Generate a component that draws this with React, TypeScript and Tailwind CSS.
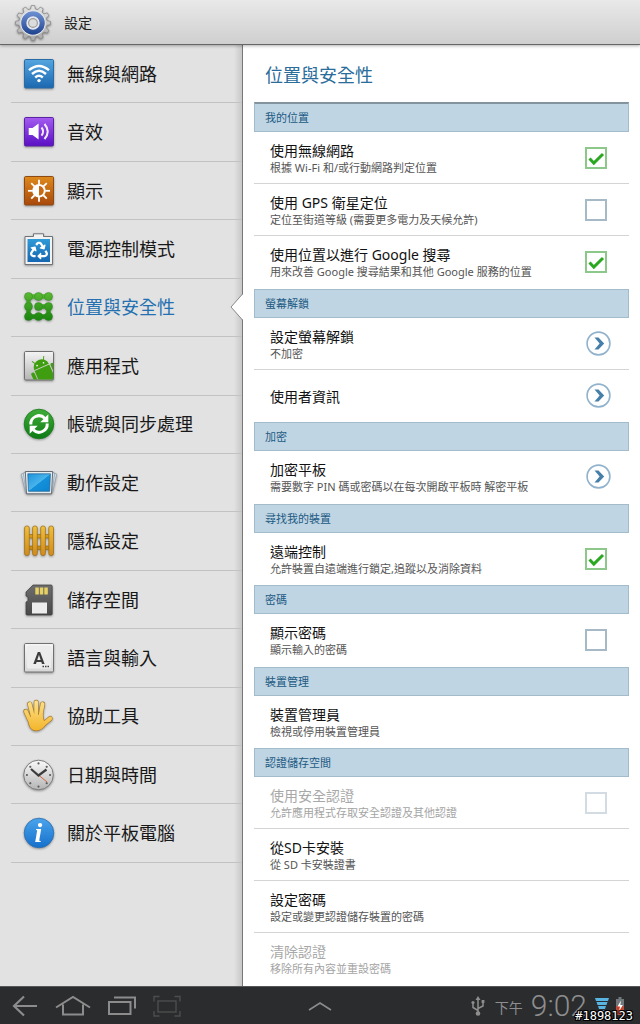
import type { ReactNode } from "react";
import { FaRecycle } from "react-icons/fa";

function Gradient({ id, from, to }: { id: string; from: string; to: string }) {
  return (
    <linearGradient id={id} x1="0" y1="0" x2="0" y2="1">
      <stop offset="0" stopColor={from} />
      <stop offset="1" stopColor={to} />
    </linearGradient>
  );
}

function Icon({ children }: { children: ReactNode }) {
  return (
    <svg viewBox="0 0 36 36" className="size-9 shrink-0 overflow-visible drop-shadow-[0_1px_1px_rgba(0,0,0,0.35)]" aria-hidden="true">
      {children}
    </svg>
  );
}

function Tile({ id, from, to, stroke }: { id: string; from: string; to: string; stroke: string }) {
  return (
    <>
      <defs>
        <Gradient id={id} from={from} to={to} />
      </defs>
      <rect x="3.5" y="3.5" width="29" height="28.5" rx="1.2" fill={`url(#${id})`} stroke={stroke} strokeWidth="1" />
    </>
  );
}

function WifiIcon() {
  return (
    <Icon>
      <Tile id="wifi" from="#55a5e0" to="#1b68b0" stroke="#2a6ca6" />
      <g fill="none" stroke="#fff" strokeWidth="2.4">
        <path d="M8 14.2Q18 5.600 28 14.200" />
        <path d="M11 18Q18 11.600 25 18" />
        <path d="M14.200 21.500Q18 18 21.800 21.500" />
      </g>
      <circle cx="18" cy="24.600" r="1.700" fill="#fff" />
    </Icon>
  );
}

function SoundIcon() {
  return (
    <Icon>
      <Tile id="sound" from="#a45cf0" to="#5a0fc4" stroke="#5a22a4" />
      <path d="M7.700 14H11.500L17.600 9.500V25.500L11.500 21H7.700Z" fill="#fff" />
      <g fill="none" stroke="#fff" strokeWidth="2" opacity="0.9">
        <path d="M20.500 13.500Q23.800 17.500 20.500 21.600" />
        <path d="M23.500 10Q30 17.500 23.500 25" />
      </g>
    </Icon>
  );
}

function DisplayIcon() {
  const rays = [0, 45, 90, 135, 180, 225, 270, 315];
  return (
    <Icon>
      <Tile id="display" from="#de8a1c" to="#a8480c" stroke="#8e4a12" />
      <g stroke="#fff" strokeWidth="1.800">
        {rays.map((a) => (
          <path key={a} d="M18 6.800V11.500" transform={`rotate(${a} 18 17.800)`} />
        ))}
      </g>
      <circle cx="18" cy="17.800" r="5.800" fill="#c86a14" stroke="#fff" strokeWidth="2" />
      <path d="M18 12V23.600A5.800 5.800 0 0 1 18 12Z" fill="#fff" />
    </Icon>
  );
}

function PowerIcon() {
  return (
    <Icon>
      <defs>
        <Gradient id="power" from="#2f9ad8" to="#1566b0" />
      </defs>
      <path d="M4 5.500H12.500V2.800H22.500V5.500H31.500V33.500H4Z" fill="#f2f2f2" stroke="#6f7377" strokeWidth="1" strokeLinejoin="round" />
      <rect x="6.500" y="8" width="22.500" height="23" fill="url(#power)" />
      <FaRecycle x="9" y="10.500" width="17.500" height="17.500" color="#fff" />
    </Icon>
  );
}

function PatternIcon() {
  const stops = [7.500, 17.500, 27.500];
  return (
    <Icon>
      <defs>
        <linearGradient id="pattern" gradientUnits="userSpaceOnUse" x1="0" y1="3" x2="0" y2="32">
          <stop offset="0" stopColor="#5cba34" />
          <stop offset="1" stopColor="#18820c" />
        </linearGradient>
      </defs>
      <path d="M27.500 7.500H7.500V27.500H27.500V17.500H17.500" fill="none" stroke="url(#pattern)" strokeWidth="4.400" />
      {stops.map((x) =>
        stops.map((y) => <circle key={`${x}-${y}`} cx={x} cy={y} r="4" fill="url(#pattern)" stroke="#23801a" strokeWidth="0.400" />),
      )}
    </Icon>
  );
}

function AppsIcon() {
  return (
    <Icon>
      <Tile id="apps" from="#f4f4f4" to="#b4b4b4" stroke="#6e6e6e" />
      <clipPath id="appsClip">
        <rect x="4" y="4" width="28" height="27.500" />
      </clipPath>
      <g clipPath="url(#appsClip)">
        <g transform="rotate(-24 22 21)" fill="#3f9e10">
          <path d="M13.500 18.500A8 7.500 0 0 1 29.500 18.500Z" />
          <path d="M17 13L15 9.500M26 13L28 9.500" stroke="#3f9e10" strokeWidth="0.900" />
          <rect x="13.500" y="19.500" width="16" height="16" />
          <rect x="9" y="20" width="3.500" height="14" rx="1.700" />
          <rect x="30.500" y="19" width="3.500" height="12" rx="1.700" />
          <circle cx="18" cy="15.500" r="0.800" fill="#fff" />
          <circle cx="25" cy="15.500" r="0.800" fill="#fff" />
        </g>
      </g>
    </Icon>
  );
}

function SyncIcon() {
  return (
    <Icon>
      <defs>
        <Gradient id="sync" from="#3fae38" to="#0d7a14" />
      </defs>
      <circle cx="18" cy="18" r="14.800" fill="url(#sync)" stroke="#1b7a1c" strokeWidth="0.800" />
      <g fill="none" stroke="#fff" strokeWidth="3">
        <path d="M9.800 18.500A8.200 8.200 0 0 1 23.800 12.200" />
        <path d="M26.200 17.500A8.200 8.200 0 0 1 12.200 23.800" />
      </g>
      <path d="M27.300 8.300V16.300H19.300Z" fill="#fff" />
      <path d="M8.700 27.700V19.700H16.700Z" fill="#fff" />
    </Icon>
  );
}

function MotionIcon() {
  return (
    <Icon>
      <defs>
        <linearGradient id="motion" x1="0" y1="0" x2="1" y2="1">
          <stop offset="0" stopColor="#1c94dc" />
          <stop offset="0.500" stopColor="#49b4ec" />
          <stop offset="0.520" stopColor="#1490da" />
          <stop offset="1" stopColor="#0c84d0" />
        </linearGradient>
      </defs>
      <g fill="#d4e2ec" stroke="#8c9aa6" strokeWidth="0.700">
        <path d="M0.300 9L6 7.500L9 28L4.500 27.500Z" />
        <path d="M35.700 9L30 7.500L27 28L31.500 27.500Z" />
        <path d="M2.300 8L8 7L10 28.500L5 28Z" />
        <path d="M33.700 8L28 7L26 28.500L31 28Z" />
      </g>
      <path d="M4.300 6.500H31.700L30.500 28.800H5.500Z" fill="#e6ebee" stroke="#5a6068" strokeWidth="0.900" strokeLinejoin="round" />
      <path d="M6.800 8.800H29.400L28.600 26.300H7.500Z" fill="url(#motion)" stroke="#1c5e90" strokeWidth="0.700" />
    </Icon>
  );
}

function FenceIcon() {
  return (
    <Icon>
      <defs>
        <Gradient id="fence" from="#f0c03c" to="#d28a1c" />
      </defs>
      <rect x="5" y="11.500" width="26" height="3.500" fill="#d29a24" stroke="#8c6414" strokeWidth="0.600" />
      <rect x="5" y="23" width="26" height="3.500" fill="#c48a1c" stroke="#8c6414" strokeWidth="0.600" />
      {[3.600, 11.600, 19.700, 27.800].map((x) => (
        <rect key={x} x={x} y="3" width="4.700" height="29.500" rx="2" fill="url(#fence)" stroke="#9a6a14" strokeWidth="0.700" />
      ))}
    </Icon>
  );
}

function StorageIcon() {
  return (
    <Icon>
      <defs>
        <Gradient id="card" from="#6e6e6e" to="#484848" />
      </defs>
      <path d="M12 3H30Q31.200 3 31.200 4.200V32Q31.200 33 30 33H6.200Q5 33 5 32V20L7 19V15L5 14V10Z" fill="url(#card)" stroke="#3c3c3c" strokeWidth="0.700" />
      {[14.300, 18.800, 23.300].map((x) => (
        <rect key={x} x={x} y="5.500" width="3.500" height="7" fill="#e6d264" />
      ))}
      <rect x="11" y="20.500" width="15" height="11" fill="#ececec" />
    </Icon>
  );
}

function LanguageIcon() {
  return (
    <Icon>
      <Tile id="language" from="#f6f6f6" to="#d6d6d6" stroke="#707070" />
      <rect x="6" y="5.500" width="24" height="23" rx="2" fill="#ececec" />
      <text x="18" y="23.500" textAnchor="middle" fontFamily="Roboto, sans-serif" fontWeight="700" fontSize="17" fill="#3c3c3c">
        A
      </text>
      <path d="M21.500 26.500H28" stroke="#3c3c3c" strokeWidth="1.300" strokeDasharray="1.500 1" />
    </Icon>
  );
}

function HandIcon() {
  const fingers = "M4.900 13.400L8.700 22M8.700 6L12 19M15.200 4.300V18M21.600 6L19.500 18M29.300 20.500L22 26.500";
  const palm = "M7 19.500L21.500 16L22.500 22L25 26Q21 32.500 15 32.500Q9.500 32 8 26Z";
  return (
    <Icon>
      <defs>
        <linearGradient id="hand" gradientUnits="userSpaceOnUse" x1="0" y1="3" x2="0" y2="33">
          <stop offset="0" stopColor="#fbe08c" />
          <stop offset="1" stopColor="#f4b428" />
        </linearGradient>
      </defs>
      <path d={fingers} fill="none" stroke="#a67c30" strokeWidth="5" strokeLinecap="round" />
      <path d={palm} fill="#a67c30" stroke="#a67c30" strokeWidth="1.400" strokeLinejoin="round" />
      <path d={fingers} fill="none" stroke="url(#hand)" strokeWidth="3.800" strokeLinecap="round" />
      <path d={palm} fill="url(#hand)" />
    </Icon>
  );
}

function ClockIcon() {
  return (
    <Icon>
      <defs>
        <Gradient id="clock" from="#fafafa" to="#b4b4b4" />
      </defs>
      <circle cx="17.500" cy="18" r="14.800" fill="url(#clock)" stroke="#7c7c7c" strokeWidth="1" />
      {[0, 45, 90, 135, 180, 225, 270, 315].map((a) => (
        <circle key={a} cx="17.500" cy="6.400" r="1.100" fill="#5c5c5c" transform={`rotate(${a} 17.500 18)`} />
      ))}
      <path d="M17.500 18L26 25" stroke="#d4582c" strokeWidth="0.900" />
      <path d="M10 12L17.500 18.500L25.500 12.500" fill="none" stroke="#3c3c3c" strokeWidth="2.200" />
    </Icon>
  );
}

function InfoIcon() {
  return (
    <Icon>
      <defs>
        <Gradient id="info" from="#4ba4ec" to="#1570cc" />
      </defs>
      <circle cx="18" cy="18" r="14.800" fill="url(#info)" stroke="#2c6cac" strokeWidth="0.800" />
      <text x="17.500" y="27" textAnchor="middle" fontFamily="'Liberation Serif', serif" fontStyle="italic" fontWeight="700" fontSize="28" fill="#fff">
        i
      </text>
    </Icon>
  );
}

function SettingsGear() {
  const points: string[] = [];
  const teeth = 12;
  for (let i = 0; i < teeth; i++) {
    [
      [-0.32, 14.2],
      [-0.18, 17.5],
      [0.18, 17.5],
      [0.32, 14.2],
    ].forEach(([offset, radius]) => {
      const angle = ((i + offset) / teeth) * Math.PI * 2;
      points.push(`${(18 + radius * Math.sin(angle)).toFixed(2)},${(18 - radius * Math.cos(angle)).toFixed(2)}`);
    });
  }
  return (
    <svg viewBox="0 0 36 36" className="size-9 shrink-0 drop-shadow-[0_1px_1px_rgba(0,0,0,0.4)]" aria-hidden="true">
      <defs>
        <Gradient id="gearMetal" from="#e4e4e4" to="#a8a8a8" />
        <Gradient id="gearBlue" from="#6f92d4" to="#1f428e" />
      </defs>
      <polygon points={points.join(" ")} fill="url(#gearMetal)" stroke="#888" strokeWidth="0.800" strokeLinejoin="round" />
      <circle cx="18" cy="18" r="12.600" fill="#ececec" />
      <circle cx="18" cy="18" r="11.800" fill="url(#gearBlue)" />
      <circle cx="18" cy="18" r="6" fill="#f0f0f0" stroke="#e4e8f0" strokeWidth="1.400" />
      <circle cx="18" cy="18" r="4.400" fill="#dcdcdc" stroke="#9c9c9c" strokeWidth="1.200" />
    </svg>
  );
}

const menu: { label: string; icon: ReactNode; active?: boolean }[] = [
  { label: "無線與網路", icon: <WifiIcon /> },
  { label: "音效", icon: <SoundIcon /> },
  { label: "顯示", icon: <DisplayIcon /> },
  { label: "電源控制模式", icon: <PowerIcon /> },
  { label: "位置與安全性", icon: <PatternIcon />, active: true },
  { label: "應用程式", icon: <AppsIcon /> },
  { label: "帳號與同步處理", icon: <SyncIcon /> },
  { label: "動作設定", icon: <MotionIcon /> },
  { label: "隱私設定", icon: <FenceIcon /> },
  { label: "儲存空間", icon: <StorageIcon /> },
  { label: "語言與輸入", icon: <LanguageIcon /> },
  { label: "協助工具", icon: <HandIcon /> },
  { label: "日期與時間", icon: <ClockIcon /> },
  { label: "關於平板電腦", icon: <InfoIcon /> },
];

type Setting = {
  title: string;
  note?: string;
  kind: "check" | "open" | "plain";
  checked?: boolean;
  disabled?: boolean;
};

const sections: { heading: string; items: Setting[] }[] = [
  {
    heading: "我的位置",
    items: [
      { title: "使用無線網路", note: "根據 Wi-Fi 和/或行動網路判定位置", kind: "check", checked: true },
      { title: "使用 GPS 衛星定位", note: "定位至街道等級 (需要更多電力及天候允許)", kind: "check" },
      { title: "使用位置以進行 Google 搜尋", note: "用來改善 Google 搜尋結果和其他 Google 服務的位置", kind: "check", checked: true },
    ],
  },
  {
    heading: "螢幕解鎖",
    items: [
      { title: "設定螢幕解鎖", note: "不加密", kind: "open" },
      { title: "使用者資訊", kind: "open" },
    ],
  },
  {
    heading: "加密",
    items: [{ title: "加密平板", note: "需要數字 PIN 碼或密碼以在每次開啟平板時 解密平板", kind: "open" }],
  },
  {
    heading: "尋找我的裝置",
    items: [{ title: "遠端控制", note: "允許裝置自遠端進行鎖定,追蹤以及消除資料", kind: "check", checked: true }],
  },
  {
    heading: "密碼",
    items: [{ title: "顯示密碼", note: "顯示輸入的密碼", kind: "check" }],
  },
  {
    heading: "裝置管理",
    items: [{ title: "裝置管理員", note: "檢視或停用裝置管理員", kind: "plain" }],
  },
  {
    heading: "認證儲存空間",
    items: [
      { title: "使用安全認證", note: "允許應用程式存取安全認證及其他認證", kind: "check", disabled: true },
      { title: "從SD卡安裝", note: "從 SD 卡安裝證書", kind: "plain" },
      { title: "設定密碼", note: "設定或變更認證儲存裝置的密碼", kind: "plain" },
      { title: "清除認證", note: "移除所有內容並重設密碼", kind: "plain", disabled: true },
    ],
  },
];

function SettingText({ item }: { item: Setting }) {
  return (
    <span className="flex min-w-0 flex-1 flex-col pt-0.5">
      <span className={`text-[14px] leading-[18px] ${item.disabled ? "text-[#a8a8a8]" : "text-[#111]"}`}>{item.title}</span>
      {item.note && <span className={`text-[11px] leading-4 ${item.disabled ? "text-[#a4a4a4]" : "text-[#555]"}`}>{item.note}</span>}
    </span>
  );
}

function SettingRow({ item }: { item: Setting }) {
  if (item.kind === "check") {
    return (
      <label className="flex min-h-[51px] items-center pr-[22px] pl-4">
        <SettingText item={item} />
        <span className="relative size-[22px] shrink-0">
          <input
            type="checkbox"
            defaultChecked={item.checked}
            disabled={item.disabled}
            className="peer block size-full appearance-none border-2 border-[#a6b9c6] bg-white checked:border-[#8cc88a] disabled:border-[#d2dce2]"
          />
          <svg viewBox="0 0 22 22" className="pointer-events-none absolute inset-0 hidden size-full peer-checked:block" aria-hidden="true">
            <path d="M4.500 11.500L8.800 16L18 7" fill="none" stroke="#2aa822" strokeWidth="3" />
          </svg>
        </span>
      </label>
    );
  }
  return (
    <button
      type="button"
      disabled={item.disabled}
      className="flex min-h-[51px] w-full items-center pr-[18px] pl-4 text-left"
    >
      <SettingText item={item} />
      {item.kind === "open" && (
        <svg viewBox="0 0 25 25" className="size-[25px] shrink-0" aria-hidden="true">
          <circle cx="12.500" cy="12.500" r="11.400" fill="#fff" stroke="#90b2cc" strokeWidth="1.600" />
          <path d="M8.500 6.500H12.500L18.200 12.500L12.500 18.500H8.500L13.600 12.500Z" fill="#4680aa" />
        </svg>
      )}
    </button>
  );
}

function NavButton({ label, children }: { label: string; children: ReactNode }) {
  return (
    <button type="button" aria-label={label} className="shrink-0 text-[#8c8c8c]">
      {children}
    </button>
  );
}

export default function App() {
  return (
    <div className="flex h-screen flex-col overflow-hidden bg-white font-['Noto_Sans','Noto_Sans_CJK_TC',sans-serif]">
      <header className="relative z-10 flex h-[45px] shrink-0 items-center gap-[13px] border-b border-[#666] bg-linear-to-b from-[#e9e9e9] to-[#cfcfcf] pt-0.5 pl-[15px] shadow-[0_1px_3px_rgba(0,0,0,0.3)]">
        <SettingsGear />
        <h1 className="text-[14px] leading-5 text-[#222]">設定</h1>
      </header>

      <div className="flex min-h-0 flex-1">
        <nav className="w-[243px] shrink-0 border-r border-[#777] bg-linear-to-l from-[#c8c8c8] via-[#e2e2e2] via-[8px] to-[#e2e2e2] pl-[11px]">
          <ul className="flex min-h-[818px] flex-col">
            {menu.map(({ label, icon, active }) => (
              <li key={label} className="relative flex flex-1 border-b border-[#c2c2c2]">
                <a
                  href="#"
                  aria-current={active ? "page" : undefined}
                  className={`flex flex-1 items-center gap-2.5 pl-2.5 text-[18px] leading-6 ${active ? "text-[#2470b0]" : "text-[#181818]"}`}
                >
                  {icon}
                  <span>{label}</span>
                </a>
                {active && (
                  <svg viewBox="0 0 13 28" className="absolute top-1/2 -right-px h-7 w-[13px] -translate-y-1/2" aria-hidden="true">
                    <path d="M13 1L1 14L13 27Z" fill="#fff" />
                    <path d="M12.500 1L1 14L12.500 27" fill="none" stroke="#8a8a8a" strokeWidth="1" />
                  </svg>
                )}
              </li>
            ))}
          </ul>
        </nav>

        <main className="min-w-0 flex-1 overflow-hidden px-[11px]">
          <h2 className="flex h-[57px] items-center pt-0.5 pl-[11px] text-[18px] leading-6 text-[#2a6c9a]">位置與安全性</h2>
          <div>
            {sections.map((section) => (
              <section key={section.heading} className="group even:pt-px">
                <h3 className="flex h-[29px] items-center border border-[#a3bccc] bg-[#c0d5e4] pl-2.5 text-[11px] leading-4 text-[#205a82] group-first:h-[30px] group-first:border-t-2 group-first:border-t-[#84949e]">
                  {section.heading}
                </h3>
                <ul>
                  {section.items.map((item) => (
                    <li key={item.title} className="border-b border-[#d4d4d4] last:border-transparent">
                      <SettingRow item={item} />
                    </li>
                  ))}
                </ul>
              </section>
            ))}
          </div>
        </main>
      </div>

      <footer className="relative z-10 grid h-[38px] shrink-0 grid-cols-[1fr_auto_1fr] items-center border-t border-[#55585a] bg-[#2b2c2e]">
        <div className="flex items-center gap-[17px] pl-3">
          <NavButton label="返回">
            <svg viewBox="0 0 26 22" className="h-[22px] w-[26px]" fill="none" stroke="currentColor" strokeWidth="2.200">
              <path d="M12 1.500L2 11L12 20.500M2 11H25" />
            </svg>
          </NavButton>
          <NavButton label="主畫面">
            <svg viewBox="0 0 36 22" className="h-[22px] w-9" fill="none" stroke="currentColor" strokeWidth="2">
              <path d="M1 12.500L18 2L35 12.500M8 9.500V19.500H28V9.500" />
            </svg>
          </NavButton>
          <NavButton label="最近使用">
            <svg viewBox="0 0 28 22" className="h-[22px] w-7" fill="none" stroke="currentColor" strokeWidth="2">
              <rect x="1" y="7" width="21.500" height="12" />
              <path d="M6 2.500H27V13.500" />
            </svg>
          </NavButton>
          <NavButton label="螢幕擷取">
            <svg viewBox="0 0 28 22" className="h-[22px] w-7 text-[#4c4d4e]" fill="none" stroke="currentColor" strokeWidth="1.400">
              <rect x="5" y="6" width="18" height="11" />
              <path d="M1 6.500V1.500H6.500M21.500 1.500H27V6.500M27 16V21H21.500M6.500 21H1V16" />
            </svg>
          </NavButton>
        </div>
        <NavButton label="展開">
          <svg viewBox="0 0 24 12" className="h-3 w-6" fill="none" stroke="currentColor" strokeWidth="1.500">
            <path d="M1 10L12 3L23 10" />
          </svg>
        </NavButton>
        <div className="flex items-center justify-end pr-4 text-[#8e8e8e]">
          <svg viewBox="0 0 14 20" className="mr-2.5 h-5 w-3.5" fill="none" stroke="currentColor" strokeWidth="1.500" aria-hidden="true">
            <path d="M7 3V17M7 14.500L2 11.500V7M7 12.500L12 10V6" />
            <path d="M4.500 4L7 0L9.500 4Z" fill="currentColor" stroke="none" />
            <circle cx="7" cy="17.500" r="2.300" fill="currentColor" stroke="none" />
            <circle cx="2" cy="6.500" r="1.600" fill="currentColor" stroke="none" />
            <rect x="10.600" y="4" width="2.800" height="3" fill="currentColor" stroke="none" />
          </svg>
          <span className="mr-2 pt-1 text-[14px] leading-5">下午</span>
          <time className="mr-2 font-['Roboto',sans-serif] text-[30px] leading-8 font-light">9:02</time>
          <svg viewBox="0 0 14 16" className="mr-[7px] h-4 w-3.5" aria-hidden="true">
            <path d="M0 0H14L13 3H1ZM1.500 4H12.500L11.500 7H2.500ZM3 8H11L10 11H4ZM4.500 12H9.500L7 16Z" fill="#58b4e0" />
          </svg>
          <svg viewBox="0 0 8 18" className="h-[18px] w-2" aria-hidden="true">
            <path d="M2.500 0H5.500V2H8V18H0V2H2.500Z" fill="#70787c" />
            <rect x="0.500" y="9" width="7" height="8.500" fill="#d03c24" />
            <path d="M5 3.500L1.500 9.500H4L3 14.500L6.800 8H4.300Z" fill="#fff" />
          </svg>
        </div>
        <span className="absolute right-[7px] bottom-0 font-['DejaVu_Sans_Mono',monospace] text-[12px] leading-4 text-white [text-shadow:1px_0_#000,-1px_0_#000,0_1px_#000,0_-1px_#000,1px_1px_#000,-1px_-1px_#000,1px_-1px_#000,-1px_1px_#000]">
          #1898123
        </span>
      </footer>
    </div>
  );
}
